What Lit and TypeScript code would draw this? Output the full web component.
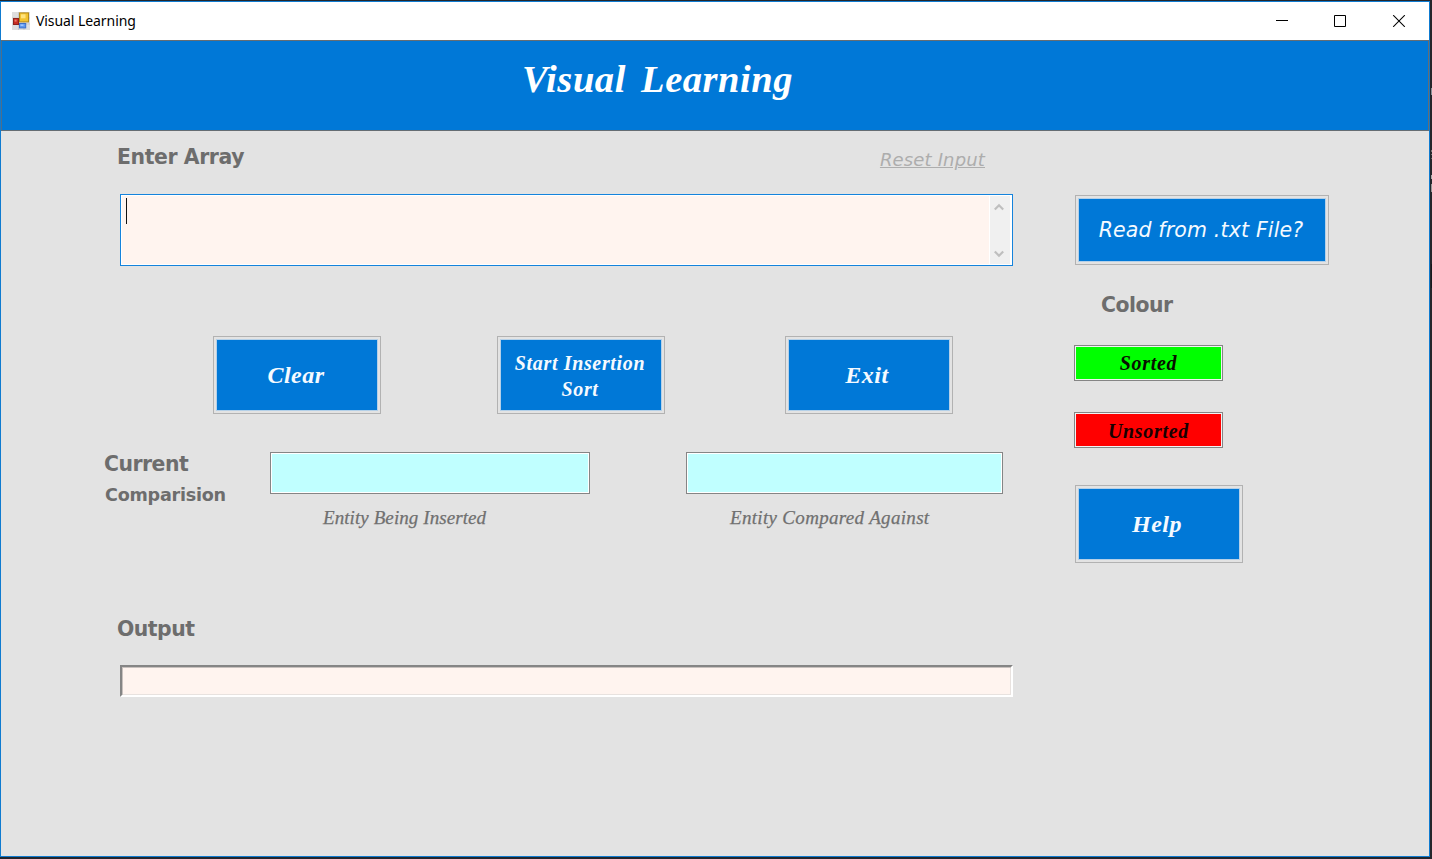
import { LitElement, html, css } from "lit";
import { customElement } from "lit/decorators.js";

@customElement("app-root")
export class AppRoot extends LitElement {
  static styles = css`
    :host { display: block; width: 1432px; height: 859px; overflow: hidden; }
    * { box-sizing: border-box; }
    .desktop {
      height: 859px; padding: 1px 2px 2px 0;
      background: linear-gradient(#23262c, #23262c) 0 0 / 1429px 100% no-repeat, linear-gradient(#25262b 0 88px, #8a9298 88px 95px, #25262b 95px 150px, #777 150px 152px, #25262b 152px 154px, #777 154px 155px, #25262b 155px 158px, #666 158px 159px, #25262b 159px 175px, #aaa 175px 179px, #25262b 179px 184px, #999 184px 192px, #25262b 192px 264px, #17181c 264px 288px, #25262b 288px) right top / 1px 100% no-repeat #25262b;
    }
    .window { height: 856px; border: 1px solid #0f7bd0; background: #e3e3e3; display: flex; flex-direction: column; }
    .titlebar { height: 38px; flex: none; background: #fff; display: flex; align-items: center; padding-left: 11px; color: #000; }
    .caption { font: 14px/20px "Noto Sans", sans-serif; letter-spacing: -0.07px; margin-left: 6px; flex: 1; white-space: nowrap; }
    .controls { display: flex; gap: 46px; margin-right: 23px; }
    .app-icon, .controls svg { display: block; }
    .header { height: 91px; flex: none; border: 1px solid #656d73; border-left-color: #4b6e8c; background: #0078d7; padding: 18px 0 0 520px; }
    .title { margin: 0; color: #fff; font: italic bold 38.5px/40px "Liberation Serif", serif; letter-spacing: 0.55px; word-spacing: 5px; white-space: nowrap; }
    .content { flex: 1; display: flex; }
    .main { width: 1012px; flex: none; display: flex; flex-direction: column; }
    .side { margin-left: 61px; display: flex; flex-direction: column; align-items: flex-start; padding-top: 64px; }
    .label { color: #6d6d6d; font: bold 20.4px/24px "DejaVu Sans", sans-serif; letter-spacing: -0.5px; white-space: nowrap; }
    .top-row { height: 63px; padding: 14px 28px 0 116px; display: flex; justify-content: space-between; }
    .top-row .label { letter-spacing: -0.4px; }
    .reset { color: #adadad; font: italic 18px/24px "DejaVu Sans", sans-serif; letter-spacing: 0.15px; text-decoration: underline; margin-top: 3px; white-space: nowrap; }
    .entry { height: 72px; margin-left: 119px; width: 893px; flex: none; border: 1px solid #1583dc; background: #fff; padding: 1px; display: flex; }
    .entry-text { flex: 1; background: #fff4ef; padding: 2px 0 0 4px; }
    .caret { width: 1px; height: 26px; background: #111; }
    .scroll { width: 20px; margin: 0 1px; background: #f0f0f0; display: flex; flex-direction: column; justify-content: space-between; align-items: center; padding: 7px 2px 6px 0; }
    .actions { display: flex; margin: 70px 0 0 212px; }
    .btn { width: 168px; height: 78px; border: 1px solid #b2b2b2; padding: 2px; background: #e3e3e3; display: flex; }
    .face { flex: 1; background: #0078d7; border: 1px solid #b4d0e8; color: #f5faff; display: flex; align-items: center; justify-content: center; text-align: center; font: italic bold 24px/26px "Liberation Serif", serif; letter-spacing: 0.5px; padding: 0 2px 0 0; }
    .btn-start { margin-left: 116px; }
    .btn-start .face { font-size: 20px; letter-spacing: 0.65px; padding-top: 2px; }
    .btn-exit { margin-left: 120px; }
    .btn-exit .face { padding-right: 4px; }
    .btn-file { width: 254px; height: 70px; margin-left: 1px; }
    .btn-file .face { font: italic 20.5px/24px "DejaVu Sans", sans-serif; letter-spacing: 0.16px; padding: 0 2px 0 0; }
    .compare { display: flex; margin-top: 38px; }
    .compare-label { width: 165px; padding-left: 103px; margin-right: 104px; }
    .second-line { font-size: 17.6px; letter-spacing: -0.25px; margin: 7px 0 0 1px; }
    .box { height: 42px; border: 1px solid #858585; background: #c0ffff; box-shadow: inset 0 0 0 1px #fff; }
    .entity-a { width: 320px; }
    .entity-b { width: 317px; margin-left: 96px; }
    .hint { color: #707070; font: italic 19px/24px "Liberation Serif", serif; -webkit-text-stroke: 0.25px #707070; margin-top: 12px; padding-left: 53px; letter-spacing: 0.08px; white-space: nowrap; }
    .entity-b .hint { padding-left: 44px; letter-spacing: 0.32px; }
    .output-label { margin: 87px 0 0 116px; }
    .output { height: 32px; width: 893px; margin: 24px 0 0 119px; background: #fff4ef; border: 2px solid; border-color: #858585 #fff #fff #858585; box-shadow: inset 1px 1px 0 #c8c1be, inset -1px -1px 0 #e8e2df; }
    .colour-label { margin: 28px 0 0 27px; }
    .chip { width: 149px; height: 36px; border: 1px solid #858585; box-shadow: inset 0 0 0 1px #f3f3f3; display: flex; align-items: center; justify-content: center; color: #081000; font: italic bold 20px/24px "Liberation Serif", serif; letter-spacing: 0.7px; }
    .sorted { background: #0f0; margin-top: 28px; }
    .unsorted { background: #f00; margin-top: 31px; color: #180000; padding-top: 1px; }
    .btn-help { margin: 37px 0 0 1px; }
    .btn-help .face { padding-right: 4px; }
  `;

  render() {
    return html`
      <div class="desktop">
        <div class="window">
          <div class="titlebar">
            <svg class="app-icon" width="18" height="18" viewBox="0 0 18 18">
              <rect x="0" y="0" width="18" height="18" fill="#dedede" />
              <path d="M6.5 0v18M0 6h18M0 12h18M12 0v18" stroke="#c9c9c9" />
              <rect x="7.5" y="0.9" width="9" height="9" fill="#f2c230" stroke="#b38a19" />
              <rect x="9" y="2.3" width="4.5" height="4" fill="#ffe37d" />
              <rect x="1.5" y="6.5" width="5" height="6" fill="#c92d22" stroke="#8e211c" />
              <rect x="2.6" y="7.6" width="2" height="2" fill="#ef7a6a" />
              <rect x="7.5" y="11.5" width="6.2" height="4.4" fill="#5d97ee" stroke="#3b70ca" />
              <rect x="8.5" y="12.4" width="3" height="1.6" fill="#9cc4ff" />
            </svg>
            <span class="caption">Visual Learning</span>
            <div class="controls">
              <svg width="12" height="12" viewBox="0 0 12 12"><path d="M0 5.5h12" stroke="#000" /></svg>
              <svg width="12" height="12" viewBox="0 0 12 12"><path d="M.5.5h11v11H.5z" fill="none" stroke="#000" /></svg>
              <svg width="14" height="12" viewBox="-1 0 14 12"><path d="M.2.2l11.6 11.6M11.8.2L.2 11.8" stroke="#000" stroke-width="1.1" /></svg>
            </div>
          </div>
          <div class="header"><h1 class="title">Visual Learning</h1></div>
          <div class="content">
            <div class="main">
              <div class="top-row">
                <span class="label">Enter Array</span>
                <span class="reset">Reset Input</span>
              </div>
              <div class="entry">
                <div class="entry-text"><div class="caret"></div></div>
                <div class="scroll">
                  <svg width="10" height="8" viewBox="0 0 10 8"><path d="M.8 6.5L5 2.3l4.2 4.2" fill="none" stroke="#bfbfbf" stroke-width="2.2" /></svg>
                  <svg width="10" height="8" viewBox="0 0 10 8"><path d="M.8 1.5L5 5.7l4.2-4.2" fill="none" stroke="#bfbfbf" stroke-width="2.2" /></svg>
                </div>
              </div>
              <div class="actions">
                <div class="btn"><div class="face">Clear</div></div>
                <div class="btn btn-start"><div class="face">Start Insertion<br />Sort</div></div>
                <div class="btn btn-exit"><div class="face">Exit</div></div>
              </div>
              <div class="compare">
                <div class="compare-label">
                  <div class="label">Current</div>
                  <div class="label second-line">Comparision</div>
                </div>
                <div class="entity-a"><div class="box"></div><div class="hint">Entity Being Inserted</div></div>
                <div class="entity-b"><div class="box"></div><div class="hint">Entity Compared Against</div></div>
              </div>
              <div class="label output-label">Output</div>
              <div class="output"></div>
            </div>
            <div class="side">
              <div class="btn btn-file"><div class="face">Read from .txt File?</div></div>
              <div class="label colour-label">Colour</div>
              <div class="chip sorted">Sorted</div>
              <div class="chip unsorted">Unsorted</div>
              <div class="btn btn-help"><div class="face">Help</div></div>
            </div>
          </div>
        </div>
      </div>
    `;
  }
}
